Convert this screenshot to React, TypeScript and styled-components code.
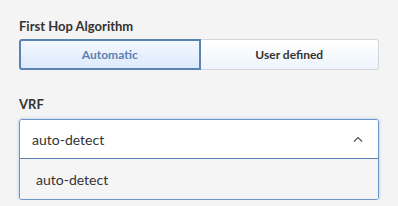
import { useState } from "react"
import styled, { createGlobalStyle } from "styled-components"

const GlobalStyle = createGlobalStyle`
	body {
		margin: 0;
		background: #f4f4f4;
		font-family: Lato, "Liberation Sans", sans-serif;
		color: #333;
	}
`

const Page = styled.div`
	padding: 18px 19px 0 19px;
	width: 360px;
`

const Label = styled.div`
	font-size: 13px;
	font-weight: 700;
	color: #333;
	line-height: 16px;
	margin-bottom: 5px;
`

const Segmented = styled.div`
	display: flex;
	height: 31px;
	margin-bottom: 26px;
`

const Segment = styled.button<{ $active?: boolean }>`
	flex: 1;
	font-family: inherit;
	font-size: 12px;
	font-weight: 700;
	cursor: pointer;
	color: ${({ $active }) => ($active ? "#5b7fb5" : "#333")};
	border: ${({ $active }) => ($active ? "2px solid #5a82b5" : "1px solid #d3d6da")};
	background: ${({ $active }) =>
		$active ? "linear-gradient(#f3f8ff, #ddeafc)" : "linear-gradient(#ffffff, #eef4fc)"};
	&:first-child {
		border-radius: 3px 0 0 3px;
	}
	&:last-child {
		border-radius: 0 3px 3px 0;
		border-left: none;
	}
`

const VrfLabel = styled(Label)`
	margin-bottom: 7px;
`

const Select = styled.div`
	border: 1px solid #6a93c9;
	border-radius: 3px;
	box-shadow: 0 0 3px rgba(90, 140, 210, 0.5);
	overflow: hidden;
`

const SelectValue = styled.div`
	display: flex;
	align-items: center;
	height: 38px;
	background: #fff;
	border-bottom: 1px solid #5b80b0;
`

const ValueText = styled.span`
	flex: 1;
	padding-left: 12px;
	font-size: 14px;
	color: #333;
`

const ChevronBox = styled.span`
	display: flex;
	padding-right: 15px;
`

const Option = styled.div`
	height: 40px;
	display: flex;
	align-items: center;
	padding-left: 16px;
	font-size: 14px;
	color: #333;
	background: #f5f5f5;
`

const Chevron = () => (
	<svg width="10" height="6" viewBox="0 0 10 6">
		<path d="M1 5.5 L5 1.5 L9 5.5" fill="none" stroke="#555" strokeWidth="1.2" />
	</svg>
)

export default function App() {
	const [mode, setMode] = useState<"auto" | "user">("auto")
	return (
		<Page>
			<GlobalStyle />
			<Label>First Hop Algorithm</Label>
			<Segmented>
				<Segment $active={mode === "auto"} onClick={() => setMode("auto")}>
					Automatic
				</Segment>
				<Segment $active={mode === "user"} onClick={() => setMode("user")}>
					User defined
				</Segment>
			</Segmented>
			<VrfLabel>VRF</VrfLabel>
			<Select>
				<SelectValue>
					<ValueText>auto-detect</ValueText>
					<ChevronBox>
						<Chevron />
					</ChevronBox>
				</SelectValue>
				<Option>auto-detect</Option>
			</Select>
		</Page>
	)
}
